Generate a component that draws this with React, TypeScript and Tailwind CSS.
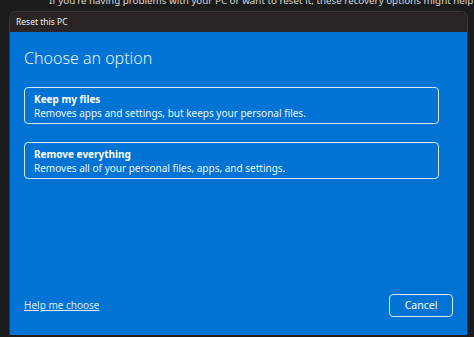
export default function App() {
  const options = [
    { title: 'Keep my files', desc: 'Removes apps and settings, but keeps your personal files.' },
    { title: 'Remove everything', desc: 'Removes all of your personal files, apps, and settings.' },
  ]

  return (
    <div
      className="w-[474px] h-[337px] overflow-hidden bg-[#1c1c1c] text-white"
      style={{ fontFamily: '"Noto Sans", "Open Sans", sans-serif' }}
    >
      <p className="-mt-[7px] pl-[49px] text-[9.8px] leading-[16px] text-[#d8d8d8] whitespace-nowrap">
        If you're having problems with your PC or want to reset it, these recovery options might help.
      </p>

      <div className="ml-[9px] mt-[2px] w-[459px] rounded-t-[7px] overflow-hidden border border-[#3a3434] border-b-0">
        <div className="h-[20px] bg-[#2a2424] pl-[6px] flex items-center text-[8.5px] text-[#f0f0f0]">
          Reset this PC
        </div>

        <div className="h-[303px] bg-[#0173d4] px-[14px] flex flex-col">
          <h1 className="mt-[15px] text-[16px] leading-[22px] font-light text-[#e9f2fb]">Choose an option</h1>

          <div className="mt-[18px] flex flex-col gap-[18px]">
            {options.map((o) => (
              <button
                key={o.title}
                className="w-[415px] h-[37px] rounded-[4px] border-[1.5px] border-[#d6e8f8] px-[9px] text-left flex flex-col justify-center"
              >
                <span className="text-[10px] leading-[14px] font-bold text-white">{o.title}</span>
                <span className="text-[10px] leading-[14px] text-[#eef5fc]">{o.desc}</span>
              </button>
            ))}
          </div>

          <div className="mt-auto mb-[18px] flex items-center justify-between">
            <a className="text-[10px] underline text-[#dbeafa]">Help me choose</a>
            <button className="w-[64px] h-[23px] rounded-[4px] border-[1.5px] border-[#d6e8f8] text-[10.5px] text-white">
              Cancel
            </button>
          </div>
        </div>
      </div>
    </div>
  )
}
